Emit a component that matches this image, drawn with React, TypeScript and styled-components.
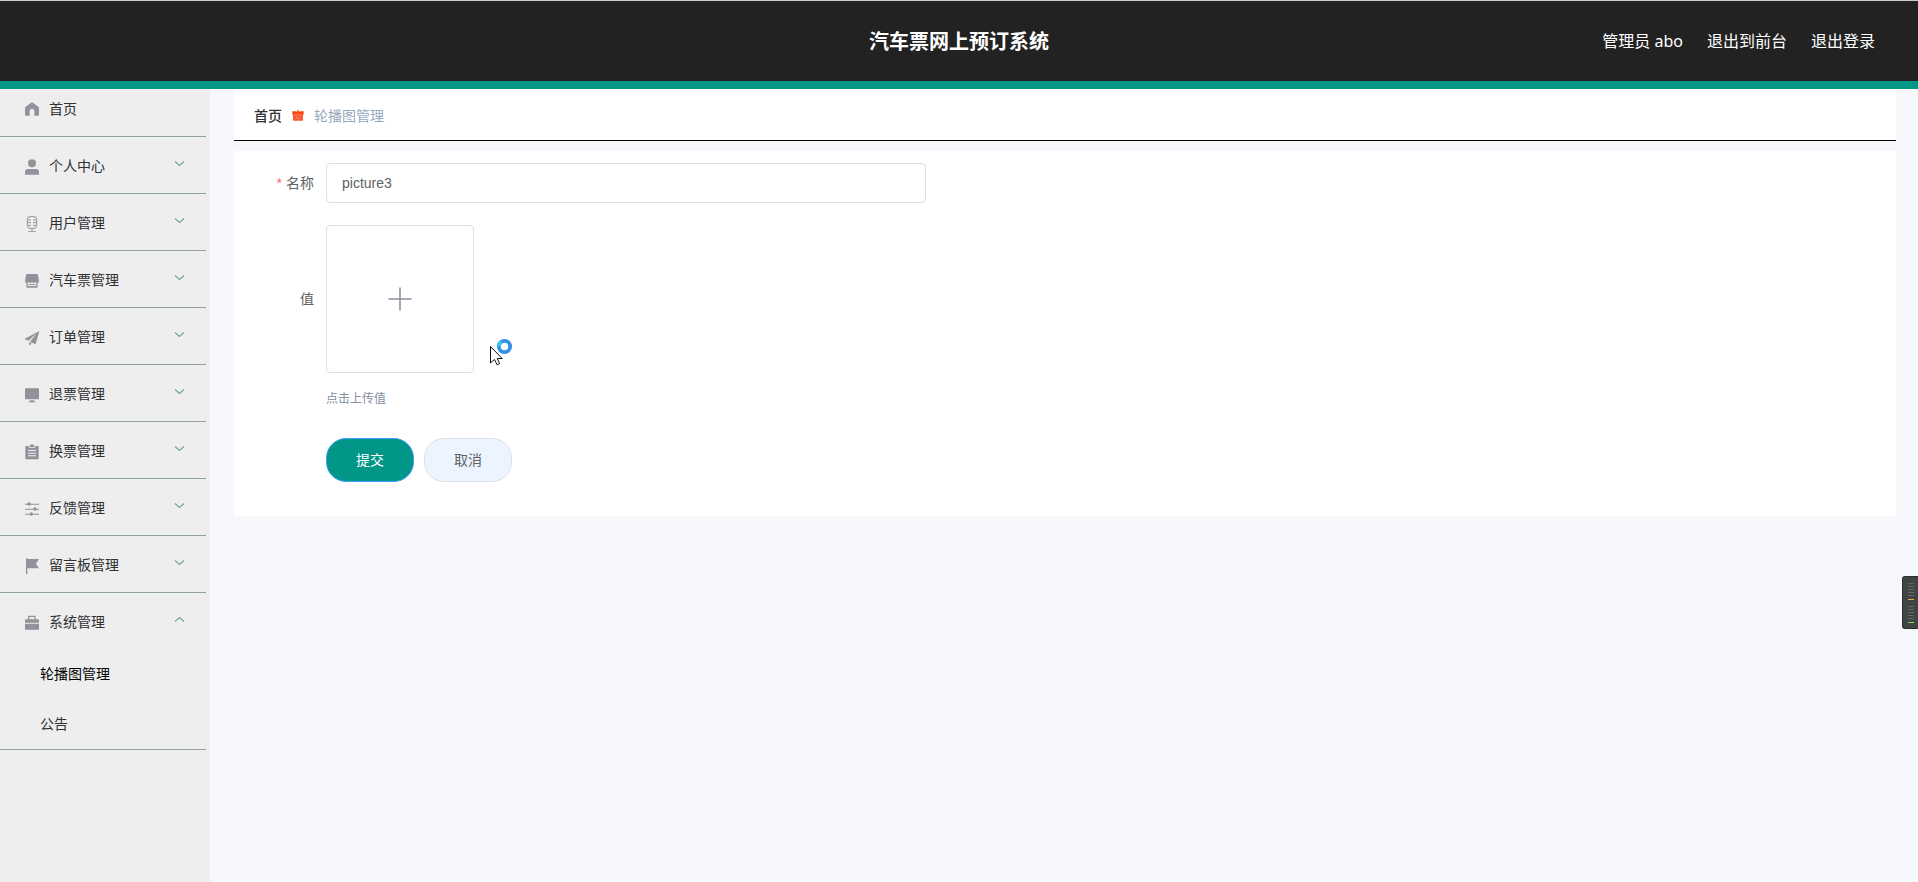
import React, { useState } from "react";
import styled, { createGlobalStyle } from "styled-components";

const GlobalStyle = createGlobalStyle`
  * { box-sizing: border-box; }
  body {
    margin: 0;
    background: #f6f8fb;
    color: #333;
    font-family: "Liberation Sans", "Noto Sans CJK SC", sans-serif;
    font-size: 14px;
  }
  button, input { font-family: inherit; font-size: inherit; }
  ul { list-style: none; margin: 0; padding: 0; }
`;

const Page = styled.div`
  min-height: 100vh;
  display: flex;
  flex-direction: column;
`;

const Header = styled.header`
  display: grid;
  grid-template-columns: 1fr auto 1fr;
  align-items: center;
  height: 89px;
  padding: 2px 43px 0;
  background: #222;
  color: #fff;
  border-top: 1px solid #c8cccb;
  border-bottom: 8px solid #009688;
  font-family: "Noto Sans", "Noto Sans CJK SC", sans-serif;
`;

const Title = styled.h1`
  grid-column: 2;
  margin: 0;
  font-size: 20px;
  line-height: 28px;
  font-weight: 700;
`;

const UserNav = styled.nav`
  display: flex;
  justify-content: flex-end;
  gap: 24px;
  padding-bottom: 2px;
  font-size: 16px;
  line-height: 24px;
`;

const NavLink = styled.a`
  color: #fff;
  text-decoration: none;
`;

const Body = styled.div`
  flex: 1;
  display: flex;
`;

const Sidebar = styled.aside`
  width: 210px;
  flex: none;
  padding-right: 4px;
  background: #eee;
`;

const MenuItem = styled.li`
  border-bottom: 1px solid #8fa39c;
`;

const MenuButton = styled.button<{ $first?: boolean }>`
  display: flex;
  align-items: center;
  width: 100%;
  height: ${(p) => (p.$first ? 47 : 56)}px;
  padding: ${(p) => (p.$first ? "0 21px 8px 24px" : "2px 21px 0 24px")};
  border: 0;
  background: none;
  color: #303133;
  line-height: 20px;
  text-align: left;
  cursor: pointer;
`;

const MenuIcon = styled.svg`
  width: 16px;
  height: 16px;
  flex: none;
  margin: 1px 9px 0 0;
  fill: #909399;
  stroke: none;
`;

const MenuText = styled.span`
  flex: 1;
`;

const Arrow = styled.svg`
  width: 11px;
  height: 7px;
  margin-bottom: 5px;
  fill: none;
  stroke: #72a594;
  stroke-width: 1.2;
`;

const SubLink = styled.a<{ $active?: boolean }>`
  display: flex;
  align-items: center;
  height: 50px;
  padding: 0 0 2px 40px;
  color: ${(p) => (p.$active ? "#000" : "#303133")};
  text-decoration: none;
`;

const Main = styled.main`
  flex: 1;
  min-width: 0;
  padding: 0 22px 0 24px;
`;

const Breadcrumb = styled.nav`
  display: flex;
  align-items: center;
  height: 52px;
  padding: 0 20px;
  margin-bottom: 10px;
  background: #fff;
  border-bottom: 1px solid #000;
`;

const CrumbLink = styled.a`
  color: #303133;
  font-weight: 500;
  text-decoration: none;
`;

const CrumbIcon = styled.svg`
  width: 12px;
  height: 12px;
  margin: 0 10px;
`;

const CrumbCurrent = styled.span`
  color: #97a8be;
`;

const Panel = styled.form`
  padding: 12px 12px 34px 0;
  background: #fff;
`;

const Field = styled.div`
  display: flex;
  align-items: center;
  gap: 12px;
  margin-bottom: 22px;
`;

const Label = styled.label`
  width: 80px;
  padding-bottom: 2px;
  color: #606266;
  text-align: right;
`;

const Required = styled.span`
  margin-right: 4px;
  color: #f56c6c;
`;

const TextInput = styled.input`
  flex: 1;
  max-width: 600px;
  height: 40px;
  padding: 0 15px;
  border: 1px solid #dcdfe6;
  border-radius: 4px;
  background: #fff;
  color: #606266;
  outline: none;
`;

const UploadBox = styled.label`
  display: flex;
  align-items: center;
  justify-content: center;
  width: 148px;
  height: 148px;
  border: 1px solid #dcdfe6;
  border-radius: 4px;
  cursor: pointer;
  svg { width: 24px; height: 24px; stroke: #8c939d; }
`;

const HiddenFile = styled.input`
  position: absolute;
  width: 1px;
  height: 1px;
  opacity: 0;
`;

const Indented = styled.div`
  padding-left: 92px;
`;

const Tip = styled(Indented)`
  margin: -6px 0 29px;
  color: #838fa1;
  font-size: 12px;
  line-height: 20px;
`;

const Actions = styled(Indented)`
  display: flex;
  gap: 10px;
`;

const ActionButton = styled.button<{ $primary?: boolean }>`
  width: 88px;
  height: 44px;
  padding: 0 0 2px;
  border: 1px solid ${(p) => (p.$primary ? "#409eff" : "#dcdfe6")};
  border-radius: 20px;
  background: ${(p) => (p.$primary ? "#009688" : "#ecf5ff")};
  color: ${(p) => (p.$primary ? "#fff" : "#606266")};
  cursor: pointer;
`;

const Pointer = styled.svg`
  position: absolute;
  left: 489px;
  top: 337px;
  width: 24px;
  height: 30px;
  pointer-events: none;
`;

const Meter = styled.svg`
  position: fixed;
  right: 0;
  top: 576px;
  width: 16px;
  height: 53px;
`;

const icons: Record<string, React.ReactNode> = {
  home: <path d="M3 19 24 4l21 15v23q0 2-2 2H31V31q0-7-7-7t-7 7v13H5q-2 0-2-2z" />,
  user: (
    <>
      <circle cx="24" cy="13" r="12" />
      <path d="M3 45v-6q0-9 9-9h24q9 0 9 9v6q0 2-2 2H5q-2 0-2-2z" />
    </>
  ),
  mic: (
    <>
      <path fill="none" stroke="#909399" strokeWidth="3" d="M18 2h12q8 0 8 8v19q0 8-8 8H18q-8 0-8-8V10q0-8 8-8zM24 37v9M13 47h22" />
      <path fill="none" stroke="#909399" strokeWidth="3" d="M12 12h9M27 12h9M12 20h9M27 20h9M12 28h9M27 28h9" />
    </>
  ),
  shop: (
    <>
      <path d="M9 3h30q2 0 3 3l3 18q0 6-6 6-4 0-5-3-2 3-5 3t-5-3q-2 3-5 3t-5-3q-2 3-5 3-6 0-6-6L6 6q1-3 3-3z" />
      <path d="M7 28h4v11h26V28h4v14q0 2-2 2H9q-2 0-2-2z" />
      <path d="M14 33h20v3H14z" />
    </>
  ),
  plane: <path d="M46 3 1 27l12 5 25-22-20 25 17 8zM15 36l8 4-7 7z" />,
  monitor: (
    <>
      <path d="M5 4h38q2 0 2 2v29q0 2-2 2H5q-2 0-2-2V6q0-2 2-2z" />
      <path d="M19 40h10l1 3h4v3H14v-3h4z" />
    </>
  ),
  clipboard: (
    <>
      <path fillRule="evenodd" d="M6 6h8v5h20V6h8q2 0 2 2v36q0 2-2 2H6q-2 0-2-2V8q0-2 2-2zm6 12v3h24v-3zm0 8v3h24v-3zm0 8v3h24v-3z" />
      <path d="M17 3h3q4-4 8 0h3v6H17z" />
    </>
  ),
  sliders: (
    <>
      <path d="M3 8h42v3H3zM3 23h42v3H3zM3 38h42v3H3z" />
      <circle cx="15" cy="9" r="5" />
      <circle cx="33" cy="24" r="5" />
      <circle cx="22" cy="39" r="5" />
    </>
  ),
  flag: <path d="M6 1h4v2h35L36 17l9 14H10v17H6z" />,
  briefcase: (
    <>
      <path fillRule="evenodd" d="M12 13V4q0-2 2-2h19q2 0 2 2v9h8q2 0 2 2v8H3v-8q0-2 2-2zm4 0h15V6H16z" />
      <path d="M3 26h42v16q0 2-2 2H5q-2 0-2-2z" />
    </>
  ),
};

const menu = [
  { icon: "user", text: "个人中心" },
  { icon: "mic", text: "用户管理" },
  { icon: "shop", text: "汽车票管理" },
  { icon: "plane", text: "订单管理" },
  { icon: "monitor", text: "退票管理" },
  { icon: "clipboard", text: "换票管理" },
  { icon: "sliders", text: "反馈管理" },
  { icon: "flag", text: "留言板管理" },
];

function Icon({ name }: { name: string }) {
  return (
    <MenuIcon viewBox="0 0 48 48" aria-hidden="true">
      {icons[name]}
    </MenuIcon>
  );
}

function Chevron({ up }: { up?: boolean }) {
  return (
    <Arrow viewBox="0 0 11 7" aria-hidden="true">
      <path d={up ? "M1 5.5 5.5 1.5 10 5.5" : "M1 1.5 5.5 5.5 10 1.5"} />
    </Arrow>
  );
}

export default function App() {
  const [name, setName] = useState("picture3");
  return (
    <Page>
      <GlobalStyle />
      <Header>
        <Title>汽车票网上预订系统</Title>
        <UserNav>
          <span>管理员 abo</span>
          <NavLink href="#front">退出到前台</NavLink>
          <NavLink href="#logout">退出登录</NavLink>
        </UserNav>
      </Header>
      <Body>
        <Sidebar>
          <ul>
            <MenuItem>
              <MenuButton type="button" $first>
                <Icon name="home" />
                <MenuText>首页</MenuText>
              </MenuButton>
            </MenuItem>
            {menu.map((m) => (
              <MenuItem key={m.text}>
                <MenuButton type="button" aria-expanded={false}>
                  <Icon name={m.icon} />
                  <MenuText>{m.text}</MenuText>
                  <Chevron />
                </MenuButton>
              </MenuItem>
            ))}
            <MenuItem>
              <MenuButton type="button" aria-expanded={true}>
                <Icon name="briefcase" />
                <MenuText>系统管理</MenuText>
                <Chevron up />
              </MenuButton>
              <ul>
                <li><SubLink href="#carousel" $active>轮播图管理</SubLink></li>
                <li><SubLink href="#notice">公告</SubLink></li>
              </ul>
            </MenuItem>
          </ul>
        </Sidebar>
        <Main>
          <Breadcrumb>
            <CrumbLink href="#home">首页</CrumbLink>
            <CrumbIcon viewBox="0 0 36 36" aria-hidden="true">
              <path fill="#ff4410" d="M1 7h11l3 1 3-7 3 7 3-1h11v10H1z" />
              <path fill="#fa5733" d="M3 17h30v15q0 3-3 3H6q-3 0-3-3z" />
              <path fill="none" stroke="#ffa488" strokeWidth="2" d="M9 19h4M23 19h4M12 26q6 4 12 0" />
            </CrumbIcon>
            <CrumbCurrent>轮播图管理</CrumbCurrent>
          </Breadcrumb>
          <Panel onSubmit={(e) => e.preventDefault()}>
            <Field>
              <Label htmlFor="name"><Required>*</Required>名称</Label>
              <TextInput id="name" value={name} onChange={(e) => setName(e.target.value)} />
            </Field>
            <Field>
              <Label htmlFor="image">值</Label>
              <UploadBox>
                <HiddenFile id="image" type="file" />
                <svg viewBox="0 0 24 24" aria-hidden="true">
                  <path strokeWidth="1.6" d="M12 0.5v23M0.5 12h23" />
                </svg>
              </UploadBox>
            </Field>
            <Tip>点击上传值</Tip>
            <Actions>
              <ActionButton type="submit" $primary>提交</ActionButton>
              <ActionButton type="button">取消</ActionButton>
            </Actions>
          </Panel>
        </Main>
      </Body>
      <Pointer viewBox="0 0 24 30" aria-hidden="true">
        <circle cx="15.5" cy="9.5" r="5.7" fill="#fff" stroke="#3390e8" strokeWidth="3.8" />
        <path d="M9.8 9.5a5.7 5.7 0 0 1 3-5" fill="none" stroke="#35c3f3" strokeWidth="3.8" />
        <path d="M1.5 9.5v16.5l4-3.5 2.6 5.3 2.6-1.2-2.5-5.1h5z" fill="#fff" stroke="#111" />
      </Pointer>
      <Meter viewBox="0 0 16 53" aria-hidden="true">
        <path d="M16 0H3Q0 0 0 3v47q0 3 3 3h13z" fill="#2b2d2e" />
        <path d="M16 1H3Q1 1 1 3v47q0 2 2 2h13z" fill="#414444" />
        <path d="M6 7.5h6M6 10.5h6M6 13.5h6M6 16.5h6M6 19.5h6M6 30.5h6M6 33.5h6M6 36.5h6M6 39.5h6M6 42.5h6" stroke="#66666b" />
        <path d="M6 23.5h6" stroke="#e9a84a" />
        <path d="M6 46.5h6" stroke="#8edb4c" />
      </Meter>
    </Page>
  );
}
